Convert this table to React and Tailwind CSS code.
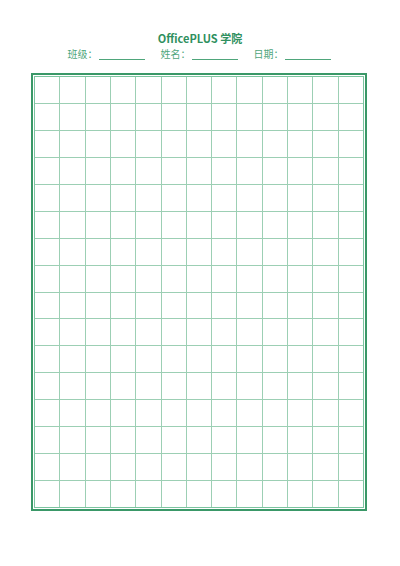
import React from 'react';

const COLS = 13;
const ROWS = 16;

function Field({ label }) {
    return (
        <div className="flex items-end">
            <span className="text-[10px] leading-[12px] text-[#4fa67b]">{label}</span>
            <span className="ml-px w-[46px] border-b border-[#4fa67b]" />
        </div>
    );
}

export default function App() {
    const cells = Array.from({ length: COLS * ROWS });

    return (
        <div className="w-[400px] h-[566px] bg-white font-['Noto_Sans_CJK_SC','Noto_Sans',sans-serif]">
            <div className="pt-[31px] text-center text-[11px] leading-[14px] font-bold text-[#2f9060]">
                OfficePLUS 学院
            </div>
            <div className="mt-[3px] flex justify-center gap-4 pr-[2px]">
                <Field label="班级：" />
                <Field label="姓名：" />
                <Field label="日期：" />
            </div>

            <div className="ml-[31px] mt-[13px] w-[336px] h-[438px] border-2 border-[#3a9868] p-px">
                <div className="h-full border border-[#7cc4a0] bg-[#9ccfb4] grid grid-cols-13 grid-rows-16 gap-px">
                    {cells.map((_, i) => (
                        <div key={i} className="bg-white" />
                    ))}
                </div>
            </div>
        </div>
    );
}
